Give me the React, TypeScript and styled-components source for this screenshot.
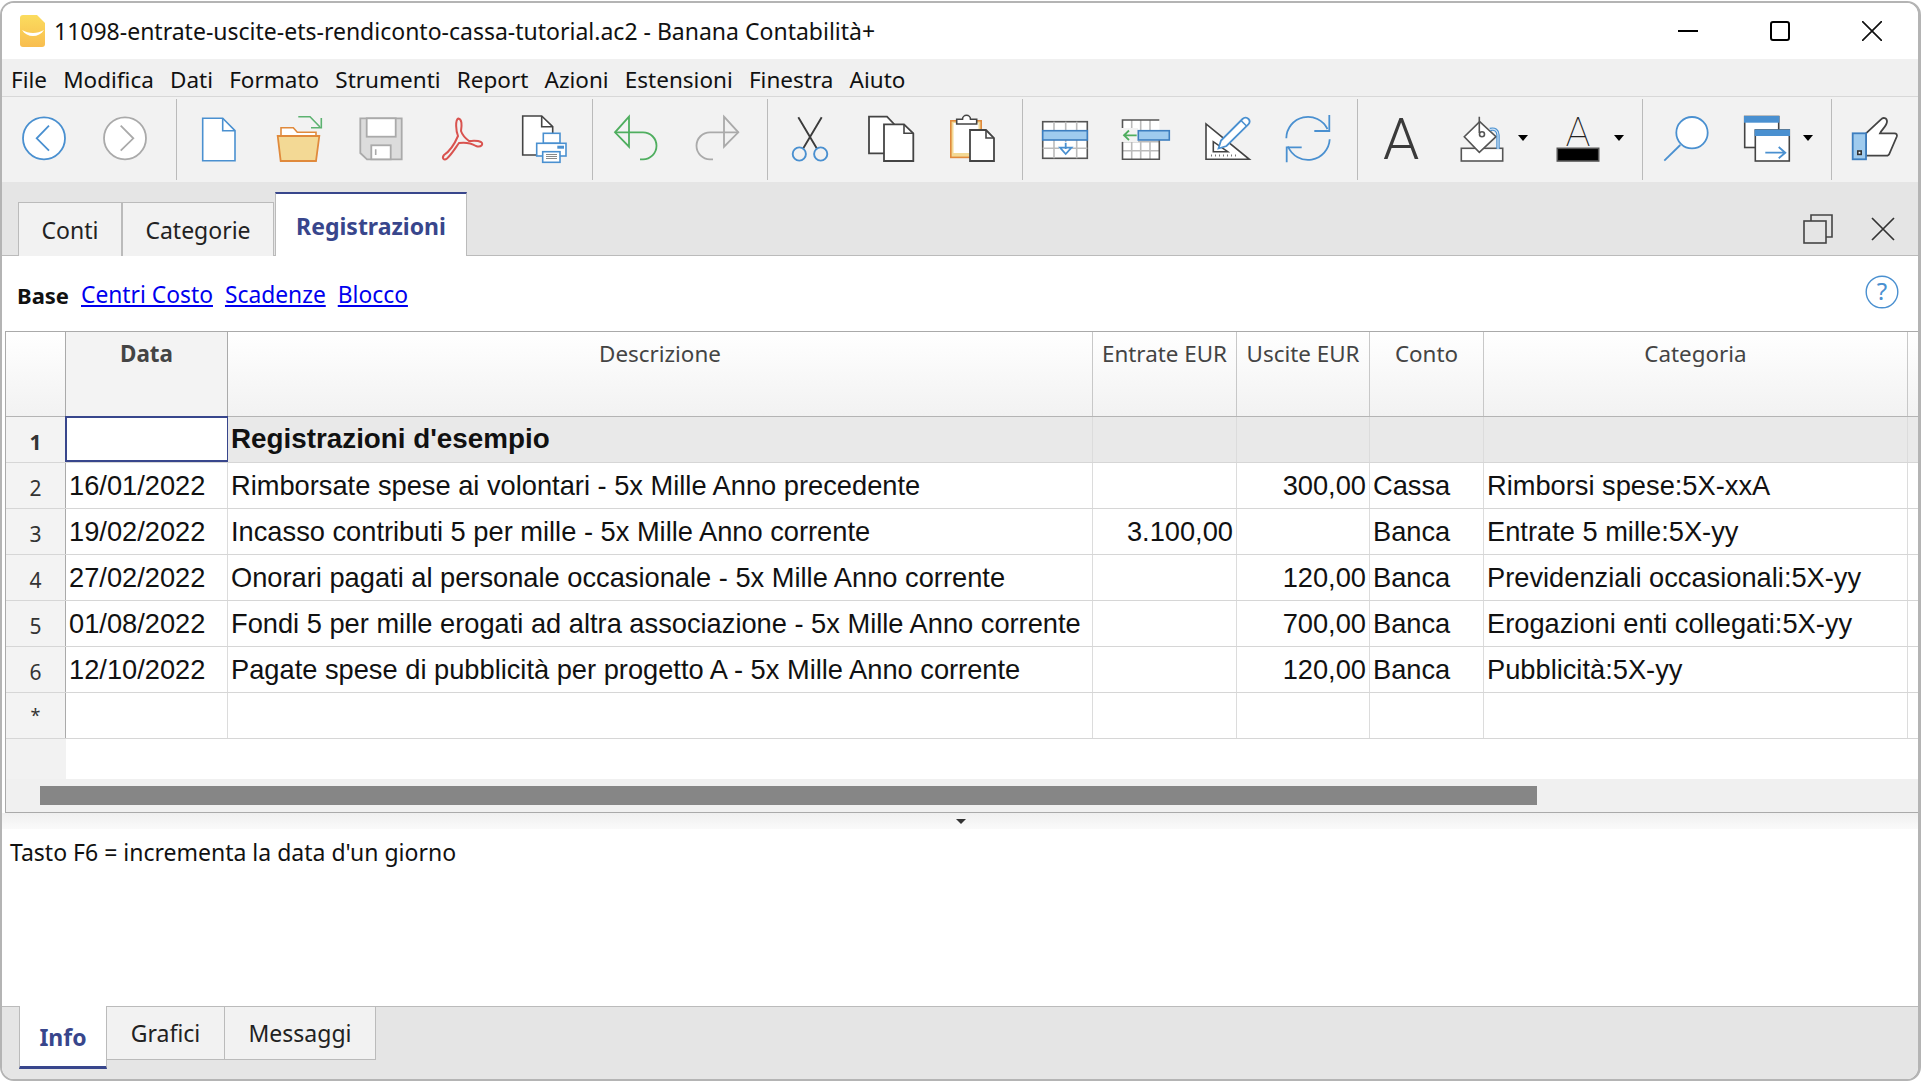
import React from 'react'
import styled, { createGlobalStyle } from 'styled-components'

const BLUE = '#4a90d0'
const DARK = '#444'
const GRAY = '#aaa'
const GREEN = '#4fae5f'
const ORANGE = '#e08a3c'
const NAVY = '#38468c'
const UI_FONT = '"Noto Sans", "Open Sans", sans-serif'
const CELL_FONT = '"Liberation Sans", Arial, sans-serif'
const COLUMNS = '60px 162px 865px 144px 133px 114px 424px 1fr'

const Global = createGlobalStyle`
  html, body { margin: 0; padding: 0; background: #fff; overflow: hidden; }
  * { box-sizing: border-box; }
`

const Ico = ({ children }: { children: React.ReactNode }) => (
  <IconSvg viewBox="0 0 48 48" fill="none" strokeWidth="1.6">{children}</IconSvg>
)

const IconBack = () => (
  <Ico>
    <circle cx="24" cy="23.3" r="21" fill="#fff" stroke={BLUE} strokeWidth="1.8" />
    <path d="M29 10.7 16.7 23.3 29 35.7" stroke={BLUE} strokeWidth="1.8" />
  </Ico>
)
const IconForward = () => (
  <Ico>
    <circle cx="24" cy="23.3" r="21" fill="#fff" stroke={GRAY} strokeWidth="1.8" />
    <path d="M19.7 10.7 32.3 23.3 19.7 35.7" stroke={GRAY} strokeWidth="1.8" />
  </Ico>
)
const IconNew = () => (
  <Ico>
    <path d="M7.7 3.3H27.7L40 15.7V45.7H7.7Z" fill="#fff" stroke={BLUE} />
    <path d="M27.7 3.3V15.7H40" stroke={BLUE} />
  </Ico>
)
const IconOpen = () => (
  <Ico>
    <path d="M7 21V12.7H19.3L23.3 17.3H42V21" fill="#fff" stroke={ORANGE} />
    <path d="M3.7 21H45.3L42 46H6.7Z" fill="#f3d995" stroke={ORANGE} strokeWidth="1.8" />
    <path d="M24.3 1.7H36L46 12" stroke="#5cb270" />
    <path d="M47.3 3V12.7H37" stroke="#5cb270" />
  </Ico>
)
const IconSave = () => (
  <Ico>
    <path d="M3.3 3.3H44.7V44.3H10L3.3 38Z" fill="#dcdcdc" stroke={GRAY} strokeWidth="1.8" />
    <rect x="9.7" y="3.3" width="29" height="18.4" fill="#fff" stroke={GRAY} strokeWidth="1.8" />
    <rect x="14.3" y="30.3" width="19.4" height="14" fill="#fff" stroke={GRAY} strokeWidth="1.8" />
    <path d="M18.7 34.3V40" stroke={GRAY} />
  </Ico>
)
const IconPdf = () => (
  <Ico>
    <path
      d="M20.3 3.5C17 5 18 16 20 21 17 28 12 36 6 40 3.5 43 6 46 9 43.5 14 39 18 32 21 28 28 27 33 28 38 31 43 33 46 29 43 27 39 25 34 26 31 26 27 23 24 19 23 16 24 10 24 4 20.3 3.5Z"
      stroke="#d9534f"
      strokeWidth="2"
    />
  </Ico>
)
const IconPrint = () => (
  <Ico>
    <path d="M2.7 1H21.7L32.7 11.7V40H2.7Z" fill="#fff" stroke={DARK} />
    <path d="M21.7 1V11.7H32.7" stroke={DARK} />
    <rect x="23.3" y="18.3" width="16.7" height="10" fill="#fff" stroke={BLUE} />
    <rect x="16.7" y="28.3" width="29.3" height="12.7" fill="#fff" stroke={BLUE} />
    <rect x="37.3" y="30.7" width="6.7" height="3" fill={BLUE} />
    <rect x="22.7" y="36.7" width="17.3" height="10.6" fill="#fff" stroke={BLUE} />
    <path d="M26 39.5H37M26 41.5H37M26 43.5H37" stroke="#888" strokeWidth="1" />
  </Ico>
)
const IconUndo = () => (
  <Ico>
    <path d="M16 1.7 2 17.3 16 31.7Z" stroke={GREEN} strokeWidth="1.8" />
    <path d="M2 17.3H30A13.5 13.5 0 0 1 30 44.3H27" stroke={GREEN} strokeWidth="1.8" />
  </Ico>
)
const IconRedo = () => (
  <Ico>
    <path d="M31 1.7 45.3 17.3 31 31.7Z" stroke={GRAY} strokeWidth="1.8" />
    <path d="M45.3 17.3H17A13.5 13.5 0 0 0 17 44.3H20" stroke={GRAY} strokeWidth="1.8" />
  </Ico>
)
const IconCut = () => (
  <Ico>
    <path d="M12.3 2.3 30.7 33.3M35.7 2.3 17.3 33.3" stroke="#3c3c3c" strokeWidth="1.9" />
    <circle cx="13.3" cy="39" r="6.6" stroke={BLUE} strokeWidth="1.9" />
    <circle cx="34.7" cy="39" r="6.6" stroke={BLUE} strokeWidth="1.9" />
  </Ico>
)
const IconCopy = () => (
  <Ico>
    <path d="M2 1.7H20L27 9V38.3H2Z" fill="#fff" stroke={DARK} strokeWidth="1.8" />
    <path d="M17 9.3H37L46.3 18.3V46H17Z" fill="#fff" stroke={DARK} strokeWidth="1.8" />
    <path d="M37 9.3V18.3H46.3" stroke={DARK} />
  </Ico>
)
const IconPaste = () => (
  <Ico>
    <rect x="2.8" y="5.8" width="30.4" height="36.6" fill="#f3d995" stroke={ORANGE} strokeWidth="1.6" />
    <rect x="5.5" y="8" width="25" height="30" fill="#fff" />
    <path d="M8.7 9V4.3H14.5A4 4 0 0 1 22.5 4.3H28.7V9Z" fill="#fff" stroke={DARK} />
    <path d="M22 15H38L46 23V46H22Z" fill="#fff" stroke={DARK} strokeWidth="1.8" />
    <path d="M38 15V23H46" stroke={DARK} />
  </Ico>
)
const IconTableRow = () => (
  <Ico>
    <rect x="1.7" y="6.7" width="44.6" height="36.6" fill="#fff" stroke="#555" />
    <path d="M13 6.7V43.3M24.7 6.7V27M35.7 6.7V43.3M1.7 33.3H18M31 33.3H46.3" stroke="#bbb" />
    <rect x="1.7" y="15.7" width="44.6" height="9.3" fill="#9fcbee" stroke="#3d7ebf" />
    <path d="M24.7 27.7V34" stroke={BLUE} strokeWidth="1.8" />
    <path d="M19 32.7H30.5L24.7 39Z" stroke={BLUE} strokeWidth="1.8" />
  </Ico>
)
const IconTableCol = () => (
  <Ico>
    <rect x=".5" y="5" width="36.8" height="39.3" fill="#fff" />
    <path d="M9.7 5V14M18.7 5V15M28 5V15M9.7 26V44.3M18.7 26V44.3M28 26V44.3M.5 26.7H37M.5 35.7H37" stroke="#bbb" />
    <path d="M37.3 5H.5V13M.5 27V44.3H37.3V25" stroke="#555" />
    <rect x=".5" y="13" width="15.5" height="14" fill="#f2f2f2" />
    <rect x="16.3" y="15.7" width="31" height="9.3" fill="#9fcbee" stroke="#3d7ebf" />
    <path d="M14.7 20.3H2M7 15.5 2 20.3 7 25" stroke={GREEN} strokeWidth="1.8" />
  </Ico>
)
const IconRuler = () => (
  <Ico>
    <path d="M3 9V44.3H46.3Z" fill="#fff" stroke={DARK} />
    <path d="M10.3 26.7V36.7H24.7Z" stroke={DARK} />
    <path d="M8 40.5H36" stroke="#777" strokeWidth="2" strokeDasharray="1 3" />
    <path d="M15.5 33.5 18 25.5 39.5 4C41.5 2 44 2.5 45.5 4 47 5.5 47 7.5 45.3 9.5L23.5 31Z" fill="#fff" stroke={BLUE} strokeWidth="1.8" />
    <path d="M38 5.5 43.5 11" stroke={BLUE} />
  </Ico>
)
const IconRefresh = () => (
  <Ico>
    <path d="M2.3 23.3A21.7 21.7 0 0 1 43.5 14" stroke={BLUE} strokeWidth="1.8" />
    <path d="M45.3 0V16H30.3" stroke={BLUE} strokeWidth="1.8" />
    <path d="M45.7 24.3A21.7 21.7 0 0 1 4 31.5" stroke={BLUE} strokeWidth="1.8" />
    <path d="M2.7 47.3V32.3H17.7" stroke={BLUE} strokeWidth="1.8" />
  </Ico>
)
const IconFont = () => (
  <Ico>
    <BigLetter x="24" y="44.3" textAnchor="middle">A</BigLetter>
  </Ico>
)
const IconFill = () => (
  <Ico>
    <rect x="3.3" y="33.3" width="41.4" height="12.7" fill="#fff" stroke="#555" />
    <path d="M21.7 6.7 38 21.7 21.3 37.3 6.3 21.7Z" fill="#fff" stroke="#555" />
    <circle cx="24" cy="19.3" r="2.5" stroke="#555" />
    <path d="M21.3 1.7V18" stroke="#555" />
    <path d="M32 14.5C37 13 40 16 40 20V34" stroke={BLUE} strokeWidth="3.4" />
    <path d="M32 14.5C37 13 40 16 40 20V34" stroke="#cfe4f7" strokeWidth="1.2" />
  </Ico>
)
const IconColor = () => (
  <Ico>
    <ThinLetter x="24" y="30.7" textAnchor="middle">A</ThinLetter>
    <rect x="3.3" y="33.3" width="41.4" height="12.7" fill="#000" stroke="#555" />
  </Ico>
)
const IconSearch = () => (
  <Ico>
    <circle cx="31" cy="17.7" r="15.7" fill="#fff" stroke={BLUE} strokeWidth="1.8" />
    <path d="M19.3 30 3.3 45.7" stroke={BLUE} strokeWidth="1.8" />
  </Ico>
)
const IconWindows = () => (
  <Ico>
    <rect x="1.7" y="1.5" width="34" height="31" fill="#fff" stroke={DARK} />
    <rect x="1" y="1" width="35.4" height="6.7" fill={BLUE} />
    <rect x="12.3" y="15" width="34" height="31" fill="#fff" stroke={DARK} />
    <rect x="11.6" y="14.5" width="35.4" height="6.5" fill={BLUE} />
    <path d="M22.3 37.7H42M35.7 32 42.3 37.7 35.7 43.3" stroke={BLUE} strokeWidth="1.8" />
  </Ico>
)
const IconThumb = () => (
  <Ico>
    <path d="M15 18.3 30 4.5C32 2 36 2.8 36 6.5 36 11 31 14 29 18.3H43.5C45.5 18.3 46.3 20 45.8 21.5L38.5 38.5C38 40 37 40.7 35.5 40.7H15Z" fill="#fff" stroke={DARK} strokeWidth="1.8" />
    <rect x="1.7" y="18.3" width="13.3" height="26" fill="#9fcbee" stroke="#3d7ebf" strokeWidth="1.8" />
    <rect x="6.8" y="36" width="3.4" height="3.4" fill="#fff" stroke="#333" />
  </Ico>
)

type Row = { n: string; date: string; desc: string; inc?: string; out?: string; acc: string; cat: string }

const rows: Row[] = [
  { n: '2', date: '16/01/2022', desc: 'Rimborsate spese ai volontari - 5x Mille Anno precedente', out: '300,00', acc: 'Cassa', cat: 'Rimborsi spese:5X-xxA' },
  { n: '3', date: '19/02/2022', desc: 'Incasso contributi 5 per mille - 5x Mille Anno corrente', inc: '3.100,00', acc: 'Banca', cat: 'Entrate 5 mille:5X-yy' },
  { n: '4', date: '27/02/2022', desc: 'Onorari pagati al personale occasionale - 5x Mille Anno corrente', out: '120,00', acc: 'Banca', cat: 'Previdenziali occasionali:5X-yy' },
  { n: '5', date: '01/08/2022', desc: 'Fondi 5 per mille erogati ad altra associazione - 5x Mille Anno corrente', out: '700,00', acc: 'Banca', cat: 'Erogazioni enti collegati:5X-yy' },
  { n: '6', date: '12/10/2022', desc: 'Pagate spese di pubblicità per progetto A - 5x Mille Anno corrente', out: '120,00', acc: 'Banca', cat: 'Pubblicità:5X-yy' },
]

const menus = ['File', 'Modifica', 'Dati', 'Formato', 'Strumenti', 'Report', 'Azioni', 'Estensioni', 'Finestra', 'Aiuto']

const App = () => {
  return (
    <Win>
      <Global />
      <TitleBar>
        <svg width="26" height="34" viewBox="0 0 26 34">
          <defs>
            <linearGradient id="logo" x1="0" y1="0" x2="0" y2="1">
              <stop offset="0" stopColor="#fbdc5e" />
              <stop offset="1" stopColor="#f8bd4f" />
            </linearGradient>
          </defs>
          <path d="M3 1H17L25 9V30A3 3 0 0 1 22 33H3A3 3 0 0 1 0 30V4A3 3 0 0 1 3 1Z" fill="url(#logo)" />
          <path d="M2 16C9 20 17 20 24 16 19 24 7 24 2 16Z" fill="#fff" />
        </svg>
        <TitleText>11098-entrate-uscite-ets-rendiconto-cassa-tutorial.ac2 - Banana Contabilità+</TitleText>
        <WinControls>
          <svg width="20" height="20" viewBox="0 0 20 20"><path d="M0 10H20" stroke="#000" strokeWidth="2" /></svg>
          <svg width="20" height="20" viewBox="0 0 20 20"><rect x="1" y="1" width="18" height="18" rx="2" fill="none" stroke="#000" strokeWidth="2" /></svg>
          <svg width="20" height="20" viewBox="0 0 20 20"><path d="M0 0 20 20M20 0 0 20" stroke="#111" strokeWidth="1.7" /></svg>
        </WinControls>
      </TitleBar>

      <MenuBar>
        {menus.map(m => <MenuItem key={m}>{m}</MenuItem>)}
      </MenuBar>

      <Toolbar>
        <Group $w={174} $pad={1.5}><Slot><IconBack /></Slot><Slot><IconForward /></Slot></Group>
        <Group $w={416} $pad={1} $sep>
          <Slot><IconNew /></Slot>
          <Slot $before={0} $after={3}><IconOpen /></Slot>
          <Slot><IconSave /></Slot>
          <Slot><IconPdf /></Slot>
          <Slot $before={3}><IconPrint /></Slot>
        </Group>
        <Group $w={175} $pad={3} $sep><Slot><IconUndo /></Slot><Slot $after={2}><IconRedo /></Slot></Group>
        <Group $w={255} $pad={1} $sep><Slot><IconCut /></Slot><Slot><IconCopy /></Slot><Slot><IconPaste /></Slot></Group>
        <Group $w={335} $pad={1} $sep><Slot><IconTableRow /></Slot><Slot><IconTableCol /></Slot><Slot><IconRuler /></Slot><Slot><IconRefresh /></Slot></Group>
        <Group $w={285} $pad={2} $sep>
          <Slot><IconFont /></Slot>
          <DropSlot $pad={17}><IconFill /><Caret /></DropSlot>
          <DropSlot $pad={25.5}><IconColor /><Caret /></DropSlot>
        </Group>
        <Group $w={189} $pad={1} $sep>
          <Slot><IconSearch /></Slot>
          <DropSlot $pad={18}><IconWindows /><Caret /></DropSlot>
        </Group>
        <Group $w={80} $pad={2} $sep><Slot><IconThumb /></Slot></Group>
      </Toolbar>

      <TabBar>
        <Tab>Conti</Tab>
        <Tab $w={152}>Categorie</Tab>
        <ActiveTab>Registrazioni</ActiveTab>
        <TabTools>
          <svg width="30" height="30" viewBox="0 0 30 30" fill="none" stroke="#444" strokeWidth="1.6">
            <path d="M8 7V1H29V23H23" />
            <rect x="1" y="7" width="22" height="22" />
          </svg>
          <svg width="24" height="24" viewBox="0 0 24 24" fill="none" stroke="#333" strokeWidth="1.7">
            <path d="M1 1 23 23M23 1 1 23" />
          </svg>
        </TabTools>
      </TabBar>

      <ViewRow>
        <ViewCurrent>Base</ViewCurrent>
        <ViewLink>Centri Costo</ViewLink>
        <ViewLink>Scadenze</ViewLink>
        <ViewLink>Blocco</ViewLink>
        <Help>
          <svg width="34" height="34" viewBox="0 0 34 34" fill="none">
            <circle cx="17" cy="17" r="15.8" stroke={BLUE} strokeWidth="1.4" />
            <HelpMark x="17" y="25" textAnchor="middle">?</HelpMark>
          </svg>
        </Help>
      </ViewRow>

      <Sheet>
        <HeadRow>
          <HeadCell $corner />
          <HeadCell $current>Data</HeadCell>
          <HeadCell>Descrizione</HeadCell>
          <HeadCell>Entrate EUR</HeadCell>
          <HeadCell>Uscite EUR</HeadCell>
          <HeadCell>Conto</HeadCell>
          <HeadCell>Categoria</HeadCell>
          <HeadCell />
        </HeadRow>
        <DataRow $title>
          <RowNum $bold>1</RowNum>
          <SelectedCell />
          <Cell $bold>Registrazioni d'esempio</Cell>
          <Cell /><Cell /><Cell /><Cell /><Cell $last />
        </DataRow>
        {rows.map(r => (
          <DataRow key={r.n}>
            <RowNum>{r.n}</RowNum>
            <Cell>{r.date}</Cell>
            <Cell>{r.desc}</Cell>
            <Cell $right>{r.inc}</Cell>
            <Cell $right>{r.out}</Cell>
            <Cell>{r.acc}</Cell>
            <Cell>{r.cat}</Cell>
            <Cell $last />
          </DataRow>
        ))}
        <DataRow>
          <RowNum $star>*</RowNum>
          <Cell /><Cell /><Cell /><Cell /><Cell /><Cell /><Cell $last />
        </DataRow>
        <SheetFiller><FillerGutter /></SheetFiller>
        <ScrollTrack><ScrollThumb /></ScrollTrack>
      </Sheet>

      <Splitter><SplitCaret /></Splitter>

      <InfoPane>Tasto F6 = incrementa la data d'un giorno</InfoPane>

      <BottomTabs>
        <BottomActive>Info</BottomActive>
        <BottomTab $w={118}>Grafici</BottomTab>
        <BottomTab $w={151}>Messaggi</BottomTab>
      </BottomTabs>
    </Win>
  )
}

export default App

const Win = styled.div`
  width: 1921px;
  height: 1080px;
  margin-top: 1px;
  border: 2px solid #b4b4b4;
  border-right-width: 3px;
  border-radius: 14px;
  overflow: hidden;
  display: flex;
  flex-direction: column;
  background: #fff;
  font-family: ${UI_FONT};
  color: #111;
`
const TitleBar = styled.div`
  height: 56px;
  flex: none;
  display: flex;
  align-items: center;
  padding-left: 18px;
  background: #fff;
`
const TitleText = styled.div`
  font-size: 23px;
  margin-left: 8px;
  white-space: nowrap;
  color: #111;
`
const WinControls = styled.div`
  margin-left: auto;
  display: flex;
  gap: 72px;
  padding-right: 36px;
`
const MenuBar = styled.div`
  height: 38px;
  flex: none;
  display: flex;
  align-items: center;
  gap: 16.2px;
  padding: 3px 0 0 9px;
  background: #f0f0f0;
  border-bottom: 1px solid #d8d8d8;
`
const MenuItem = styled.span`
  font-size: 22.5px;
`
const Toolbar = styled.div`
  height: 85px;
  flex: none;
  display: flex;
  padding-top: 2px;
  background: #f2f2f2;
`
const Group = styled.div<{ $w: number; $pad: number; $sep?: boolean }>`
  width: ${p => p.$w}px;
  height: 81px;
  flex: none;
  display: flex;
  padding: 16px 0 0 ${p => p.$pad}px;
  border-left: ${p => (p.$sep ? '1.5px solid #bbb' : 'none')};
`
const Slot = styled.div<{ $before?: number; $after?: number }>`
  width: 81px;
  flex: none;
  display: flex;
  justify-content: center;
  padding-left: ${p => p.$before ?? 0}px;
  padding-right: ${p => p.$after ?? 0}px;
`
const DropSlot = styled.div<{ $pad: number }>`
  flex: none;
  display: flex;
  align-items: center;
  height: 48px;
  gap: 12px;
  padding-left: ${p => p.$pad}px;
`
const IconSvg = styled.svg`
  width: 48px;
  height: 48px;
  flex: none;
  display: block;
  overflow: visible;
`
const Caret = styled.span`
  width: 0;
  height: 0;
  margin-top: -3px;
  border-left: 5px solid transparent;
  border-right: 5px solid transparent;
  border-top: 6px solid #000;
`
const BigLetter = styled.text`
  font-family: "Roboto", sans-serif;
  font-weight: 300;
  font-size: 58px;
  fill: #3a3a3a;
`
const ThinLetter = styled.text`
  font-family: "Roboto", sans-serif;
  font-weight: 100;
  font-size: 41px;
  fill: #222;
`
const HelpMark = styled.text`
  font-family: ${UI_FONT};
  font-size: 24px;
  fill: ${BLUE};
`
const TabBar = styled.div`
  height: 74px;
  flex: none;
  display: flex;
  align-items: flex-end;
  padding-left: 16px;
  background: #e5e5e5;
  border-bottom: 1.5px solid #bbb;
`
const Tab = styled.div<{ $w?: number }>`
  width: ${p => p.$w ?? 104}px;
  height: 54px;
  margin-bottom: -1px;
  display: flex;
  align-items: center;
  justify-content: center;
  padding-top: 1px;
  font-size: 23px;
  color: #222;
  background: #f2f2f2;
  border: 1px solid #bbb;
  border-bottom: none;
`
const ActiveTab = styled.div`
  width: 192px;
  height: 65px;
  margin: 0 0 -2px 1px;
  display: flex;
  align-items: center;
  justify-content: center;
  font-size: 23px;
  font-weight: 700;
  color: ${NAVY};
  background: #fff;
  border: 1px solid #bbb;
  border-top: 2px solid ${NAVY};
  border-bottom: none;
`
const TabTools = styled.div`
  margin-left: auto;
  align-self: center;
  display: flex;
  align-items: center;
  gap: 38px;
  padding: 20px 23px 0 0;
`
const ViewRow = styled.div`
  height: 75px;
  flex: none;
  display: flex;
  align-items: center;
  gap: 12px;
  padding: 2px 0 0 15px;
  background: #fff;
`
const ViewCurrent = styled.span`
  font-size: 22px;
  font-weight: 700;
  color: #111;
`
const ViewLink = styled.span`
  font-size: 22.8px;
  color: #0000ee;
  text-decoration: underline;
`
const Help = styled.div`
  margin-left: auto;
  margin-right: 19px;
  display: flex;
  padding-bottom: 6px;
`
const Sheet = styled.div`
  height: 482px;
  flex: none;
  margin-left: 3px;
  display: flex;
  flex-direction: column;
  border-top: 1px solid #aaa;
  border-left: 1px solid #aaa;
  border-bottom: 1px solid #aaa;
`
const HeadRow = styled.div`
  display: grid;
  grid-template-columns: ${COLUMNS};
  height: 85px;
  flex: none;
  border-bottom: 1px solid #b4b4b4;
  background: linear-gradient(#fff, #f2f2f2);
`
const HeadCell = styled.div<{ $current?: boolean; $corner?: boolean }>`
  display: flex;
  justify-content: center;
  padding-top: 6px;
  font-size: 22.4px;
  color: #444;
  white-space: nowrap;
  font-weight: ${p => (p.$current ? 700 : 400)};
  background: ${p => (p.$current ? '#f3f3f3' : 'transparent')};
  border-right: 1px solid ${p => (p.$current || p.$corner ? '#aaa' : '#c8c8c8')};
  &:last-child { border-right: none; }
`
const DataRow = styled.div<{ $title?: boolean }>`
  display: grid;
  grid-template-columns: ${COLUMNS};
  height: 46px;
  flex: none;
  background: ${p => (p.$title ? '#e9e9e9' : '#fff')};
  border-bottom: 1px solid #d6d6d6;
`
const RowNum = styled.div<{ $bold?: boolean; $star?: boolean }>`
  display: flex;
  align-items: center;
  justify-content: center;
  padding-top: ${p => (p.$star ? 0 : 4)}px;
  padding-bottom: ${p => (p.$star ? 1 : 0)}px;
  font-size: ${p => (p.$star ? 18 : 21)}px;
  font-weight: ${p => (p.$bold ? 700 : 400)};
  color: #333;
  background: #f3f3f3;
  border-right: 1px solid #aaa;
`
const Cell = styled.div<{ $right?: boolean; $bold?: boolean; $last?: boolean }>`
  display: flex;
  align-items: center;
  justify-content: ${p => (p.$right ? 'flex-end' : 'flex-start')};
  padding: 0 3px ${p => (p.$bold ? 2 : 0)}px 3px;
  font-family: ${CELL_FONT};
  font-size: ${p => (p.$bold ? 27.8 : 27.25)}px;
  font-weight: ${p => (p.$bold ? 700 : 400)};
  color: #111;
  white-space: nowrap;
  border-right: ${p => (p.$last ? 'none' : '1px solid #dcdcdc')};
`
const SelectedCell = styled.div`
  margin: -1px 0 0 -1px;
  background: #fff;
  border: 2px solid ${NAVY};
  border-right-width: 1px;
`
const SheetFiller = styled.div`
  height: 40px;
  flex: none;
  display: flex;
`
const FillerGutter = styled.div`
  width: 60px;
  background: #f2f2f2;
`
const ScrollTrack = styled.div`
  height: 33px;
  flex: 1;
  display: flex;
  align-items: center;
  padding-left: 34px;
  background: #f0f0f0;
`
const ScrollThumb = styled.div`
  width: 1497px;
  height: 19px;
  background: #868686;
`
const Splitter = styled.div`
  height: 16px;
  flex: none;
  display: flex;
  align-items: center;
  justify-content: center;
  background: linear-gradient(#f0f0f0, #fafafa);
`
const SplitCaret = styled.span`
  width: 0;
  height: 0;
  margin-left: 2px;
  border-left: 5px solid transparent;
  border-right: 5px solid transparent;
  border-top: 5px solid #333;
`
const InfoPane = styled.div`
  flex: 1;
  padding: 7px 0 0 8px;
  font-size: 23px;
  color: #111;
  background: #fff;
`
const BottomTabs = styled.div`
  height: 73px;
  flex: none;
  display: flex;
  align-items: flex-start;
  padding-left: 17px;
  background: #e5e5e5;
  border-top: 1px solid #bbb;
`
const BottomActive = styled.div`
  width: 88px;
  height: 63px;
  margin-top: -1px;
  display: flex;
  align-items: center;
  justify-content: center;
  padding-top: 2px;
  font-size: 23px;
  font-weight: 700;
  color: ${NAVY};
  background: #fff;
  border-left: 1px solid #bbb;
  border-right: 1px solid #bbb;
  border-bottom: 3px solid ${NAVY};
`
const BottomTab = styled.div<{ $w: number }>`
  width: ${p => p.$w}px;
  height: 53px;
  display: flex;
  align-items: center;
  justify-content: center;
  font-size: 23px;
  color: #222;
  background: #f2f2f2;
  border: 1px solid #bbb;
  border-top: none;
  border-left: none;
`
